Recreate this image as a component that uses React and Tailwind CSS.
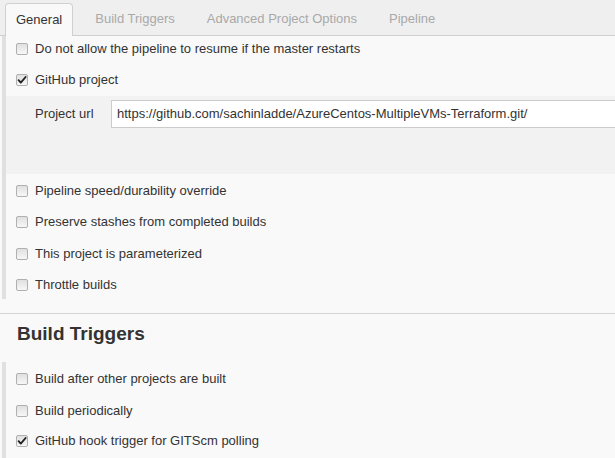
import React from 'react';

const Box = ({ checked = false }) => (
  <span className="relative inline-block w-[12px] h-[12px] rounded-[2px] border border-[#b0b0b0] bg-gradient-to-b from-[#e0e0e0] to-[#f7f7f7] shrink-0">
    {checked && (
      <svg viewBox="0 0 12 12" className="absolute -left-px -top-px w-[12px] h-[12px]">
        <path d="M2.6 6.2 L4.8 8.6 L9.6 3" fill="none" stroke="#222" strokeWidth="1.9" strokeLinecap="round" strokeLinejoin="round" />
      </svg>
    )}
  </span>
);

const Row = ({ label, checked, className = '' }) => (
  <div className={`h-[24px] flex items-center pl-[16px] ${className}`}>
    <Box checked={checked} />
    <span className="ml-[7px] text-[13px] text-[#333]">{label}</span>
  </div>
);

const tabs = ['General', 'Build Triggers', 'Advanced Project Options', 'Pipeline'];

export default function App() {
  return (
    <div
      className="w-[615px] h-[458px] overflow-hidden bg-[#f9f9f9]"
      style={{ fontFamily: '"Liberation Sans", Arial, sans-serif' }}
    >
      {/* tab strip */}
      <div className="h-[36px] bg-[#efefef] border-b border-[#cfcfcf] flex items-end pl-[5px] gap-[12px]">
        {tabs.map((t, i) =>
          i === 0 ? (
            <div
              key={t}
              className="h-[33px] -mb-px px-[10px] flex items-center rounded-t-[4px] border border-b-0 border-[#d0d0d0] bg-[#f9f9f9] text-[13px] text-[#333]"
            >
              {t}
            </div>
          ) : (
            <div key={t} className="h-[33px] px-[10px] flex items-center text-[13px] text-[#a9a9a9]">
              {t}
            </div>
          )
        )}
      </div>

      {/* General */}
      <div className="ml-[2px] border-l-[4px] border-[#e0e0e0] pt-[1px] pb-[2px]">
        <Row label="Do not allow the pipeline to resume if the master restarts" className="-ml-[6px]" />
        <Row label="GitHub project" checked className="-ml-[6px] mt-[7px]" />
        <div className="mt-[4px] h-[78px] bg-[#f2f2f2] pt-[4px]">
          <div className="flex items-center">
            <span className="w-[105px] pl-[29px] text-[13px] text-[#333]">Project url</span>
            <div className="flex-1 h-[28px] bg-white border border-[#cccccc] border-r-0 flex items-center pl-[5px] text-[13px] text-[#333] whitespace-nowrap overflow-hidden">
              https://github.com/sachinladde/AzureCentos-MultipleVMs-Terraform.git/
            </div>
          </div>
        </div>
        <Row label="Pipeline speed/durability override" className="-ml-[6px] mt-[5px]" />
        <Row label="Preserve stashes from completed builds" className="-ml-[6px] mt-[7px]" />
        <Row label="This project is parameterized" className="-ml-[6px] mt-[8px]" />
        <Row label="Throttle builds" className="-ml-[6px] mt-[7px]" />
      </div>

      {/* Build Triggers */}
      <div className="mt-[14px] border-t border-[#d4d4d4]">
        <div className="h-[40px] flex items-center pl-[17px]">
          <h2 className="text-[19px] font-bold text-[#333]">Build Triggers</h2>
        </div>
        <div className="mt-[8px] ml-[2px] border-l-[4px] border-[#e0e0e0] pt-[5px] pb-[10px]">
          <Row label="Build after other projects are built" className="-ml-[6px]" />
          <Row label="Build periodically" className="-ml-[6px] mt-[8px]" />
          <Row label="GitHub hook trigger for GITScm polling" checked className="-ml-[6px] mt-[6px]" />
        </div>
      </div>
    </div>
  );
}
